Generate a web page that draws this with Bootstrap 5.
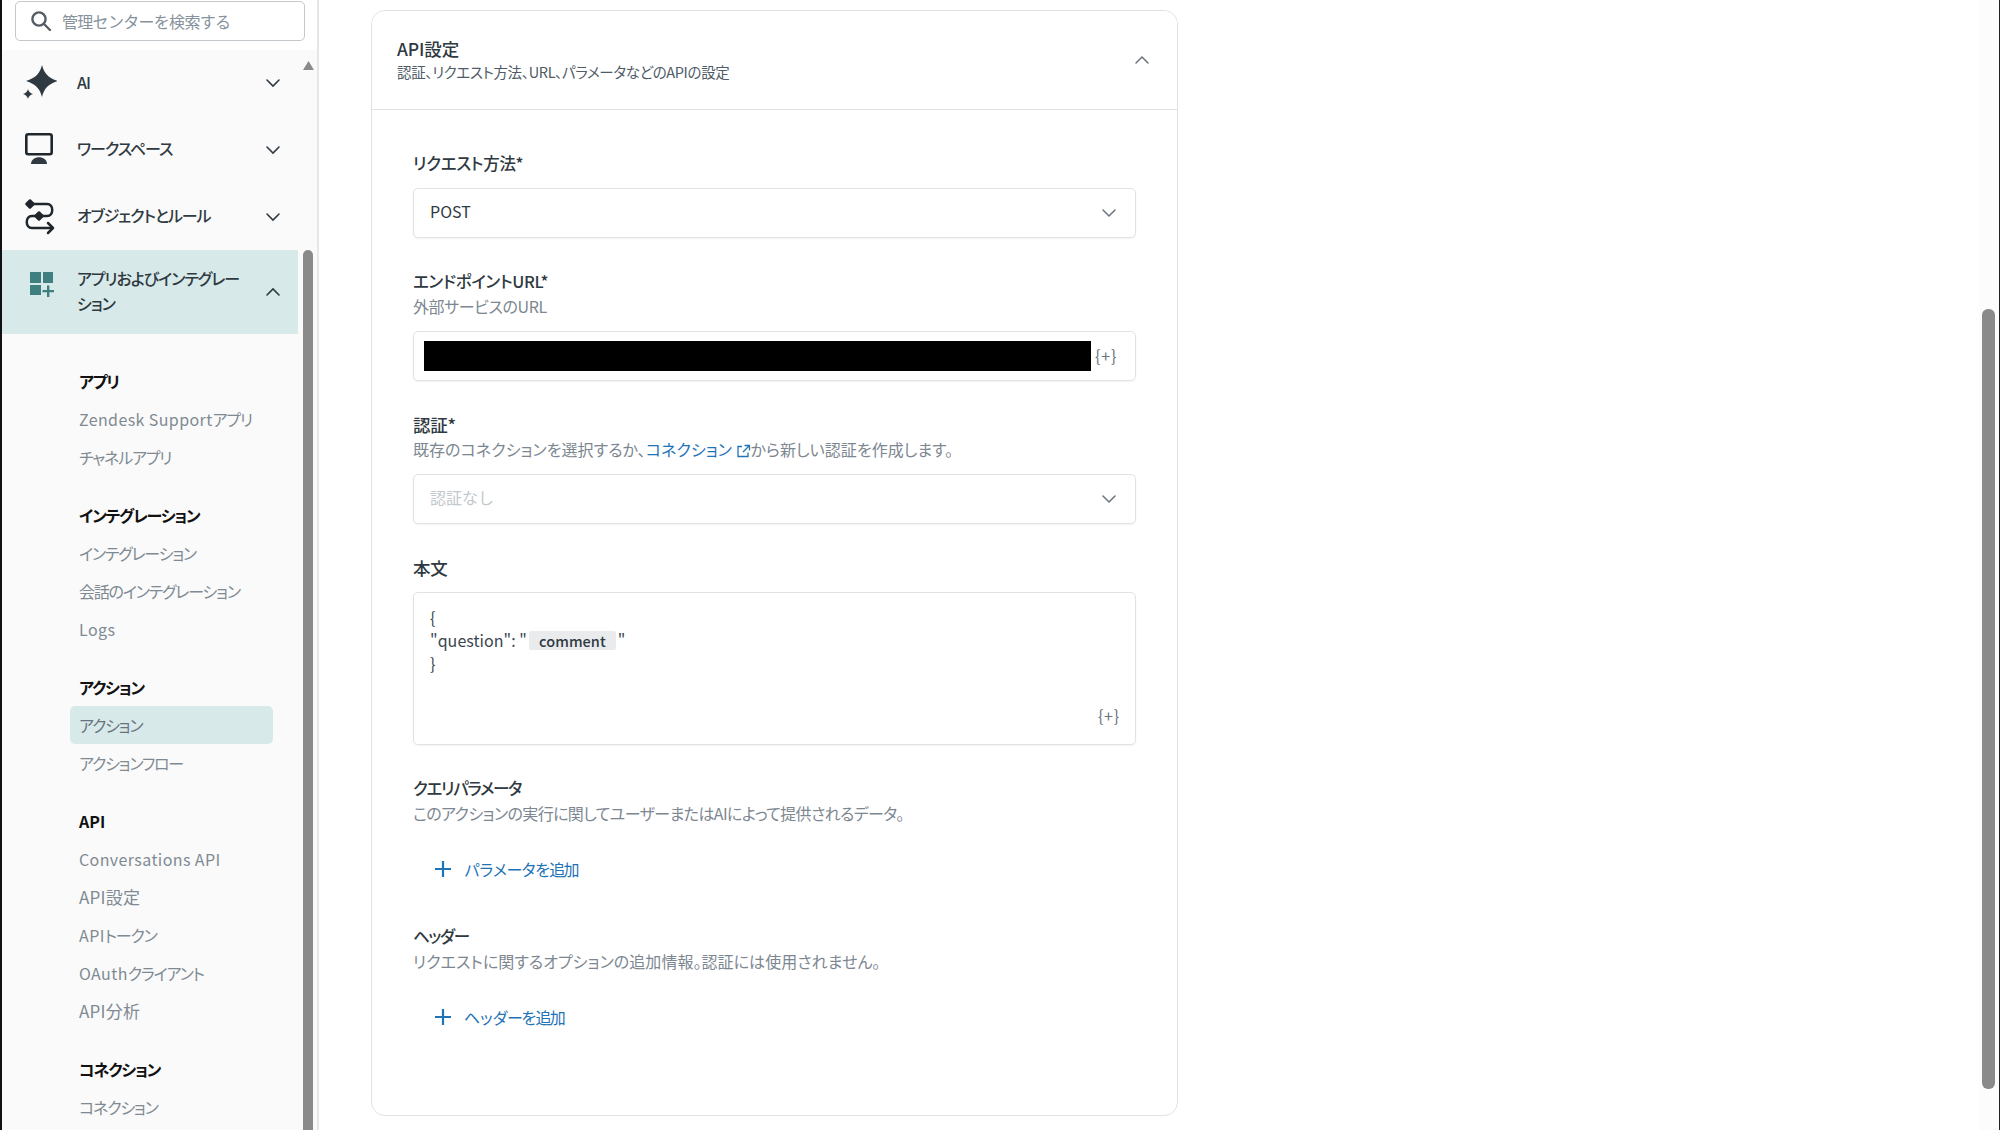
<!DOCTYPE html>
<html lang="ja">
<head>
<meta charset="utf-8">
<title>API設定</title>
<link rel="stylesheet" href="https://cdn.jsdelivr.net/npm/bootstrap@5.3.0/dist/css/bootstrap.min.css">
<style>
html,body{height:1130px;overflow:hidden}
body{font-family:"Noto Sans CJK JP","Noto Sans",sans-serif;font-feature-settings:"palt";font-size:16px;color:#2f3941;background:#fff;border-left:2px solid #111;border-right:1px solid #222}
.side{width:317px;height:1130px;border-right:2px solid #e6e6e6;background:#fff}
.searchwrap{height:50px;padding:1px 12px 0 13px}
.searchbox{height:40px;border:1.5px solid #c2c8cc;border-radius:5px;padding-left:14px;gap:10px;background:#fff}
.searchbox input{border:0;outline:0;padding:0;background:transparent;font-size:16px;letter-spacing:-.7px;width:220px;font-family:inherit}
.searchbox input::placeholder{color:#87929d;opacity:1}
.navcol{width:296px;height:1080px;background:#fafafa;overflow:hidden}
.barcol{width:19px;background:#fafafa;padding-left:5px;padding-right:4px}
.uparrow{display:block;margin-top:11px}
.sidethumb{margin-top:180px;height:900px;background:#8a8a8a;border-radius:6px 6px 0 0}
.navrow{height:66.67px;padding-left:19px;padding-right:17px;gap:20px;font-weight:500;font-size:16px;letter-spacing:-1.05px;color:#2f3941}
.navrow svg.ic{flex:none}
.navrow .lbl{flex:1;line-height:25px;padding-bottom:2px}
.navopen{height:84px;background:#d8e9ea}
.navic-open{margin-top:18px}
.subwrap{padding:28px 25px 0 68px}
.subgrp{margin-bottom:20px}
.subhead,.subitem{height:38px;padding-left:9px;line-height:38px;font-size:16px;white-space:nowrap}
.subhead{font-weight:700;color:#111;letter-spacing:-1.2px}
.subhead.latin{letter-spacing:0}
.subitem{color:#7f8a93;letter-spacing:-1.2px}
.subitem .latin,.subitem.latin{letter-spacing:.4px}
.subitem.kanjiend{font-size:17px;letter-spacing:.2px}
.subon{background:#d8e9ea;border-radius:5px;color:#68737d}
.mainarea{flex:1;padding:10px 0 0 52px;min-width:0}
.panel{width:807px;height:1106px;border:1.5px solid #e0e3e6;border-radius:14px;--bs-card-bg:#fff}
.panelhead{height:99px;background:#fff;border-bottom:1.5px solid #e0e3e6;padding:0 27px 0 25px;border-radius:14px 14px 0 0!important}
.headtext{padding-bottom:2px}
.ptitle{font-size:17.5px;font-weight:500;line-height:25px;letter-spacing:-.1px}
.pdesc{font-size:14.5px;line-height:22px;color:#4f5b66;letter-spacing:-.35px}
.panelbody{padding:41px 41px 0 41px}
.fieldblock{margin-bottom:31px}
.flabel{font-size:16.5px;font-weight:500;line-height:25px;margin-bottom:12px;letter-spacing:-.3px}
.flabel.withhint{margin-bottom:0}
.flabel.kanji{font-size:17.5px}
.flabel.narrowkana{letter-spacing:-1.3px}
.fhint{font-size:16px;line-height:25px;color:#7d8791;margin-bottom:12px;letter-spacing:-.4px}
.fhint.hintwide{letter-spacing:.05px}
.fhint.hinttight{letter-spacing:-.6px}
.fhint a{color:#1f73b7;text-decoration:none}
.sel{height:50px;border:1.5px solid #e0e3e6;border-radius:5px;padding:0 0 4px 16px;font-size:16px;color:#2f3941;font-family:inherit;background-position:right 18px center;background-size:16px 16px;box-shadow:0 1px 2px rgba(0,0,0,.05);background-image:url("data:image/svg+xml,%3csvg xmlns='http://www.w3.org/2000/svg' viewBox='0 0 16 16'%3e%3cpath fill='none' stroke='%2368737d' stroke-width='1.5' stroke-linecap='round' d='M2 5l6 6 6-6'/%3e%3c/svg%3e")}
.sel:disabled{background-color:#fff;color:#c2c8cc}
.urlbox{height:50px;border:1.5px solid #e0e3e6;border-radius:5px;padding-left:10px;box-shadow:0 1px 2px rgba(0,0,0,.05)}
.redact{width:667px;height:30px;background:#000}
.varglyph{font-size:16px;color:#68737d;letter-spacing:.8px;line-height:1;padding-bottom:2px}
.bodybox{height:153px;border:1.5px solid #e0e3e6;border-radius:5px;padding:13px 14px 0 16px;box-shadow:0 1px 2px rgba(0,0,0,.05);position:relative}
.bodyline{font-size:16px;line-height:23px;color:#3b454e;letter-spacing:.05px}
.chipvar{display:inline-block;background:#e9ebed;padding:0 10px 0 10px;font-size:14.5px;line-height:19px;font-weight:500;margin:0 2px;border-radius:2px;color:#2f3941}
.bodyvar{position:absolute;right:15px;bottom:19px}
.addrow{height:40px;margin-top:23px;padding:0 0 0 21px;gap:12px;color:#1f73b7;font-size:16px;border:0;background:none;letter-spacing:-1.7px}
.lastblock{margin-bottom:35px}
.pagebar{width:20px;background:#fcfcfc;padding:309px 4px 0 3px}
.pagethumb{height:780px;background:#8a8a8a;border-radius:6px}
</style>
</head>
<body class="d-flex">
<aside class="side flex-none">
  <div class="searchwrap">
    <div class="searchbox d-flex align-items-center">
      <svg width="22" height="22" viewBox="0 0 22 22" fill="none" stroke="#555e66" stroke-width="2.4" stroke-linecap="round"><circle cx="9" cy="9" r="6.6"/><path d="M14 14l6 6"/></svg>
      <input type="text" placeholder="管理センターを検索する" aria-label="search">
    </div>
  </div>
  <div class="d-flex">
    <nav class="navcol">
      <div class="navrow d-flex align-items-center">
        <svg class="ic" width="36" height="36" viewBox="0 0 36 36" fill="#2f3941"><path d="M21 0c2 8 6 13 16 16-10 3-14 8-16 16-2-8-6-13-16-16C15 13 19 8 21 0z"/><path d="M7 24c.6 2.600 2 4 5 5-3 1-4.400 2.400-5 5-.6-2.600-2-4-5-5 3-1 4.400-2.400 5-5z"/></svg>
        <span class="lbl">AI</span>
        <svg width="16" height="16" viewBox="0 0 16 16" fill="none" stroke="#2f3941" stroke-width="1.6" stroke-linecap="round"><path d="M2 5l6 6 6-6"/></svg>
      </div>
      <div class="navrow d-flex align-items-center">
        <svg class="ic" width="36" height="36" viewBox="0 0 36 36" fill="none"><rect x="5.300" y="2.300" width="25.400" height="20" rx="2" stroke="#1f262c" stroke-width="2.600"/><path d="M10 32c0-9 16-9 16 0z" fill="#2f3941"/></svg>
        <span class="lbl">ワークスペース</span>
        <svg width="16" height="16" viewBox="0 0 16 16" fill="none" stroke="#2f3941" stroke-width="1.6" stroke-linecap="round"><path d="M2 5l6 6 6-6"/></svg>
      </div>
      <div class="navrow d-flex align-items-center">
        <svg class="ic" width="36" height="36" viewBox="0 0 36 36" fill="none" stroke="#1f262c" stroke-width="2.500" stroke-linecap="round" stroke-linejoin="round"><path d="M9 5h17c7 0 7 12 0 12H11c-7 0-7 12 0 12h20"/><path d="M27 24l5 5-5 5"/><path d="M9 1.500l3.500 3.500L9 8.500 5.500 5z" fill="#1f262c"/><path d="M18 13.500l3.500 3.500-3.500 3.500-3.500-3.500z" fill="#1f262c"/></svg>
        <span class="lbl">オブジェクトとルール</span>
        <svg width="16" height="16" viewBox="0 0 16 16" fill="none" stroke="#2f3941" stroke-width="1.6" stroke-linecap="round"><path d="M2 5l6 6 6-6"/></svg>
      </div>
      <div class="navrow navopen d-flex align-items-center">
        <svg class="ic align-self-start navic-open" width="36" height="36" viewBox="0 0 36 36" fill="#3f7f80"><rect x="9" y="4" width="11" height="11"/><rect x="22" y="4" width="10" height="11"/><rect x="9" y="17" width="11" height="10"/><path d="M26 17.500h2.400v4.400H33v2.400h-4.600V29H26v-4.700h-4.500v-2.400H26z"/></svg>
        <span class="lbl">アプリおよびインテグレーション</span>
        <svg width="16" height="16" viewBox="0 0 16 16" fill="none" stroke="#2f3941" stroke-width="1.6" stroke-linecap="round"><path d="M2 11l6-6 6 6"/></svg>
      </div>
      <div class="subwrap">
        <div class="subgrp">
          <div class="subhead">アプリ</div>
          <div class="subitem"><span class="latin">Zendesk Support</span>アプリ</div>
          <div class="subitem">チャネルアプリ</div>
        </div>
        <div class="subgrp">
          <div class="subhead">インテグレーション</div>
          <div class="subitem">インテグレーション</div>
          <div class="subitem">会話のインテグレーション</div>
          <div class="subitem latin">Logs</div>
        </div>
        <div class="subgrp">
          <div class="subhead">アクション</div>
          <div class="subitem subon">アクション</div>
          <div class="subitem">アクションフロー</div>
        </div>
        <div class="subgrp">
          <div class="subhead latin">API</div>
          <div class="subitem latin">Conversations API</div>
          <div class="subitem kanjiend">API設定</div>
          <div class="subitem"><span class="latin">API</span>トークン</div>
          <div class="subitem"><span class="latin">OAuth</span>クライアント</div>
          <div class="subitem kanjiend">API分析</div>
        </div>
        <div class="subgrp">
          <div class="subhead">コネクション</div>
          <div class="subitem">コネクション</div>
        </div>
      </div>
    </nav>
    <div class="barcol">
      <svg class="uparrow" width="11" height="9" viewBox="0 0 11 9" fill="#8a8a8a"><path d="M5.500 0L11 9H0z"/></svg>
      <div class="sidethumb"></div>
    </div>
  </div>
</aside>
<main class="mainarea">
  <section class="card panel">
    <header class="card-header panelhead d-flex align-items-center justify-content-between">
      <div class="headtext">
        <div class="ptitle">API設定</div>
        <div class="pdesc">認証、リクエスト方法、URL、パラメータなどのAPIの設定</div>
      </div>
      <svg width="16" height="16" viewBox="0 0 16 16" fill="none" stroke="#68737d" stroke-width="1.5" stroke-linecap="round"><path d="M2 11l6-6 6 6"/></svg>
    </header>
    <div class="card-body panelbody">
      <div class="fieldblock">
        <div class="flabel">リクエスト方法*</div>
        <select class="form-select sel" aria-label="method"><option>POST</option></select>
      </div>
      <div class="fieldblock">
        <div class="flabel withhint">エンドポイントURL*</div>
        <div class="fhint">外部サービスのURL</div>
        <div class="urlbox d-flex align-items-center">
          <div class="redact"></div>
          <span class="varglyph ms-1">{+}</span>
        </div>
      </div>
      <div class="fieldblock">
        <div class="flabel kanji withhint">認証*</div>
        <div class="fhint hintwide">既存のコネクションを選択するか、<a href="#">コネクション <svg width="15" height="15" viewBox="0 0 15 15" fill="none" stroke="#1f73b7" stroke-width="1.300"><path d="M6 2.500H2v10h10v-4M8.500 1.500h5v5M13 2L7 8"/></svg></a>から新しい認証を作成します。</div>
        <select class="form-select sel" disabled aria-label="auth"><option>認証なし</option></select>
      </div>
      <div class="fieldblock">
        <div class="flabel kanji">本文</div>
        <div class="bodybox">
          <div class="bodyline">{</div>
          <div class="bodyline">"question": "<span class="chipvar">comment</span>"</div>
          <div class="bodyline">}</div>
          <span class="varglyph bodyvar">{+}</span>
        </div>
      </div>
      <div class="lastblock">
        <div class="flabel narrowkana withhint">クエリパラメータ</div>
        <div class="fhint hinttight mb-0">このアクションの実行に関してユーザーまたはAIによって提供されるデータ。</div>
        <button type="button" class="btn addrow d-flex align-items-center">
          <svg width="18" height="18" viewBox="0 0 18 18" stroke="#1f73b7" stroke-width="2.200"><path d="M9 1v16M1 9h16"/></svg>
          <span>パラメータを追加</span>
        </button>
      </div>
      <div>
        <div class="flabel narrowkana withhint">ヘッダー</div>
        <div class="fhint hintwide mb-0">リクエストに関するオプションの追加情報。認証には使用されません。</div>
        <button type="button" class="btn addrow d-flex align-items-center">
          <svg width="18" height="18" viewBox="0 0 18 18" stroke="#1f73b7" stroke-width="2.200"><path d="M9 1v16M1 9h16"/></svg>
          <span>ヘッダーを追加</span>
        </button>
      </div>
    </div>
  </section>
</main>
<div class="pagebar"><div class="pagethumb"></div></div>
<script src="https://cdn.jsdelivr.net/npm/bootstrap@5.3.0/dist/js/bootstrap.bundle.min.js"></script>
</body>
</html>
